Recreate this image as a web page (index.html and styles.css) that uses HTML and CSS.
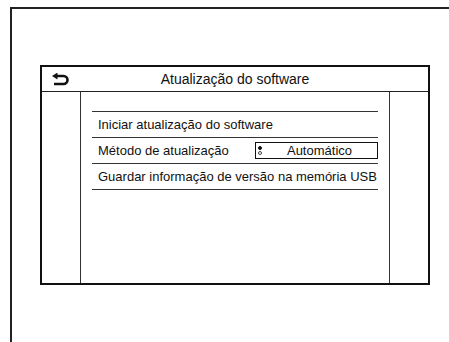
FILE: index.html
```html
<!DOCTYPE html>
<html lang="pt">
<head>
    <meta charset="UTF-8">
    <title>Atualização do software</title>
    <link rel="stylesheet" href="styles.css">
</head>
<body>
    <div class="frame">
        <div class="panel">
            <div class="panel-header">
                <svg class="back-icon" width="17" height="13" viewBox="0 0 17 13">
                    <path d="M4 3 H11.5 A4 4 0 0 1 11.5 11 H2" fill="none" stroke="#111" stroke-width="2.6"/>
                    <path d="M0 3 L5.5 -0.5 V6.5 Z" fill="#111"/>
                </svg>
                <span class="title">Atualização do software</span>
            </div>
            <div class="panel-body">
                <div class="side"></div>
                <div class="menu">
                    <div class="menu-item">Iniciar atualização do software</div>
                    <div class="menu-item">
                        <span>Método de atualização</span>
                        <span class="selector">
                            <span class="dots"><i class="dot on"></i><i class="dot"></i></span>
                            <span class="value">Automático</span>
                        </span>
                    </div>
                    <div class="menu-item">Guardar informação de versão na memória USB</div>
                </div>
                <div class="side"></div>
            </div>
        </div>
    </div>
</body>
</html>
```

FILE: styles.css
```css
body {
    margin: 0;
    font-family: 'Liberation Sans', Arial, sans-serif;
    color: #111;
    background: #fff;
}
.frame {
    margin: 7px 0 0 10px;
    height: 335px;
    border-top: 2px solid #222;
    border-left: 2px solid #222;
    box-sizing: border-box;
    padding: 56px 0 0 28px;
}
.panel {
    width: 390px;
    height: 220px;
    border: 2px solid #111;
    box-sizing: border-box;
    display: flex;
    flex-direction: column;
}
.panel-header {
    height: 24px;
    border-bottom: 1px solid #222;
    display: flex;
    align-items: center;
    position: relative;
}
.back-icon {
    position: absolute;
    left: 10px;
    top: 6px;
}
.title {
    flex: 1;
    text-align: center;
    font-size: 14px;
}
.panel-body {
    flex: 1;
    display: grid;
    grid-template-columns: 38px 1fr 38px;
}
.menu {
    border-left: 1px solid #333;
    border-right: 1px solid #333;
    padding: 19px 11px 0;
}
.menu-item {
    height: 25px;
    border-top: 1px solid #333;
    font-size: 13px;
    display: flex;
    align-items: center;
    justify-content: space-between;
    padding-left: 6px;
}
.menu-item:last-child {
    border-bottom: 1px solid #333;
}
.selector {
    width: 123px;
    height: 17px;
    border: 1px solid #111;
    box-sizing: border-box;
    display: flex;
    align-items: center;
}
.dots {
    display: flex;
    flex-direction: column;
    gap: 1px;
    padding-left: 2px;
}
.dot {
    width: 4px;
    height: 4px;
    border-radius: 50%;
    border: 1px solid #444;
    box-sizing: border-box;
}
.dot.on {
    background: #111;
    border-color: #111;
}
.value {
    flex: 1;
    text-align: center;
}
```
